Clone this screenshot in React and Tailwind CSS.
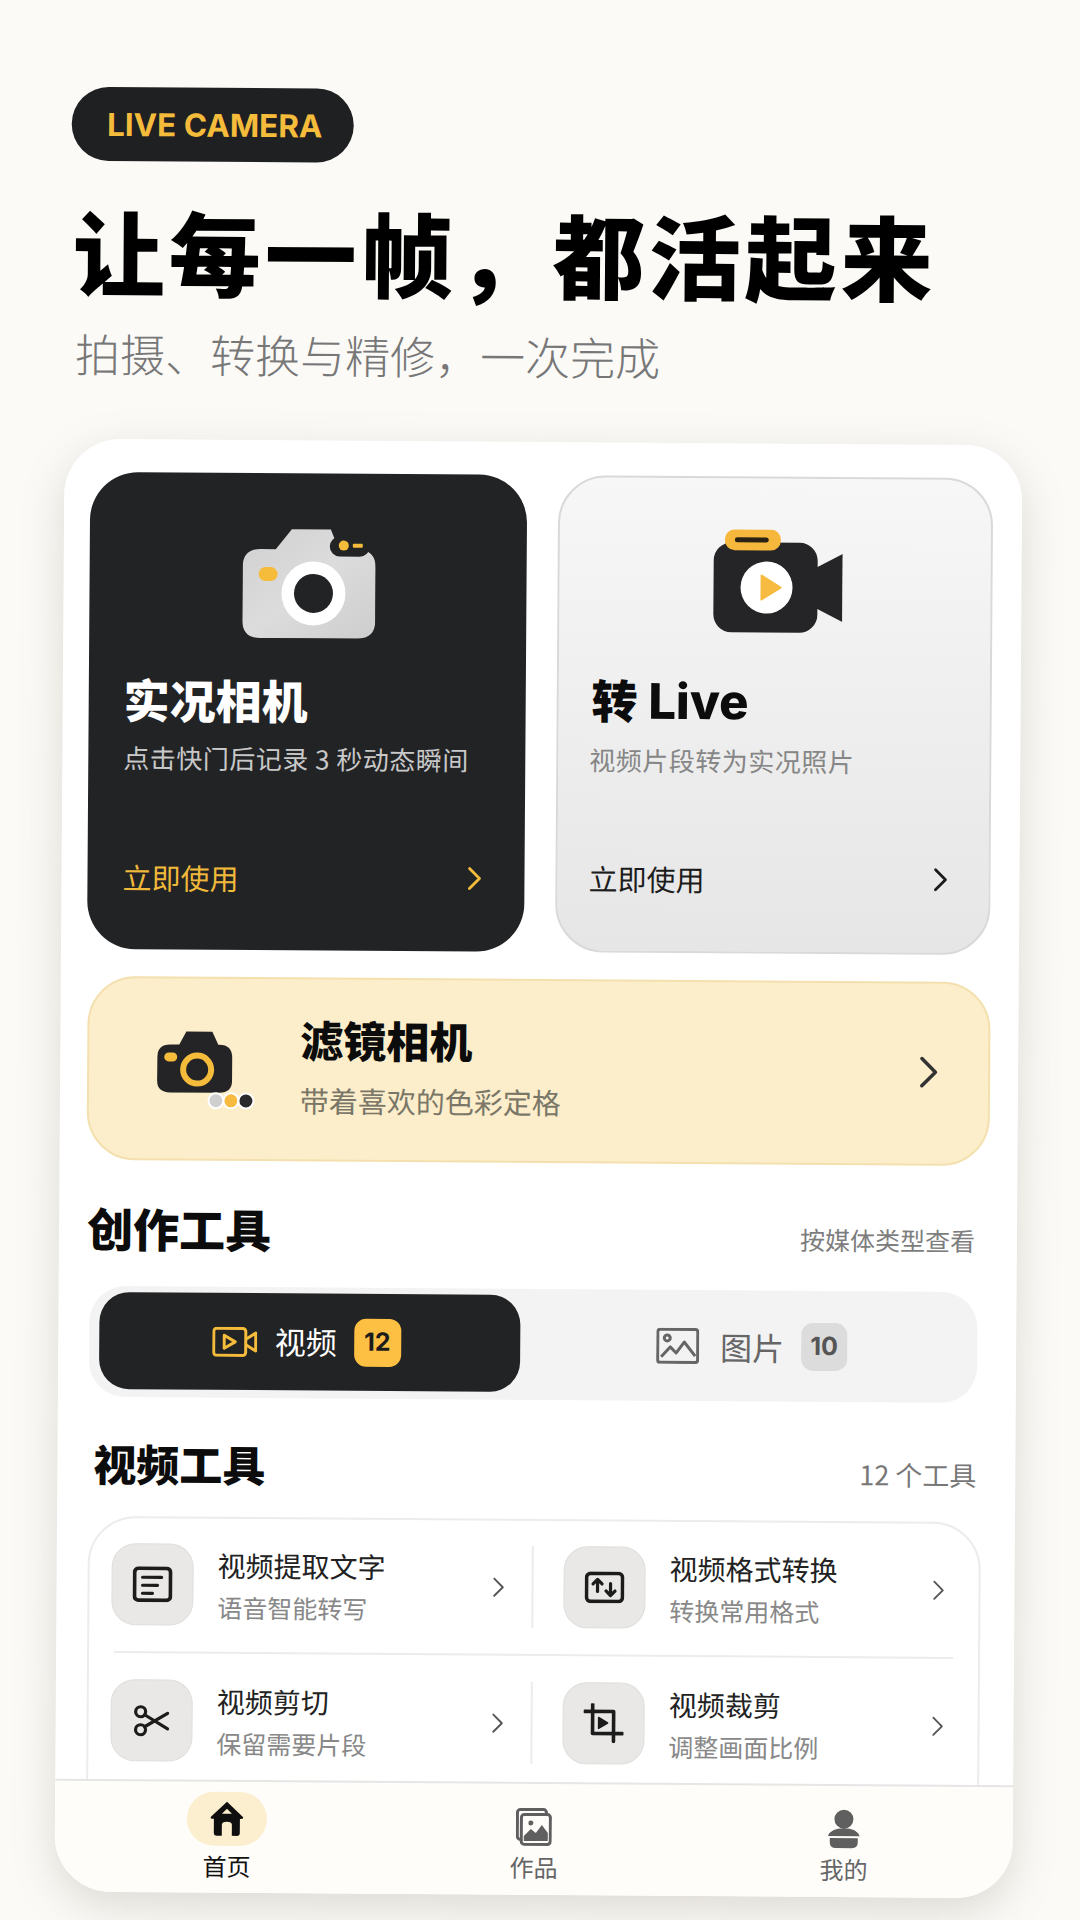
const sans = { fontFamily: '"Noto Sans CJK SC", "Noto Sans", sans-serif' };
const latin = { fontFamily: 'Inter, "Noto Sans CJK SC", sans-serif' };

function Chevron({ className, color = "#555", width = 2.6 }) {
  return (
    <svg viewBox="0 0 14 24" className={className} fill="none">
      <path d="M2 2 L12 12 L2 22" stroke={color} strokeWidth={width} strokeLinecap="round" strokeLinejoin="round" />
    </svg>
  );
}

function LiveCameraIcon() {
  return (
    <svg viewBox="0 0 133 110" className="w-[133px] h-[110px]">
      <defs>
        <linearGradient id="camBody" x1="0" y1="0" x2="1" y2="1">
          <stop offset="0" stopColor="#d0d0d0" />
          <stop offset="0.5" stopColor="#dcdcdc" />
          <stop offset="1" stopColor="#cdcdcd" />
        </linearGradient>
      </defs>
      <path d="M18 21 H33 L49 1 H88 L96 21 H115 Q133 21 133 39 V92 Q133 110 115 110 H18 Q0 110 0 92 V39 Q0 21 18 21 Z" fill="url(#camBody)" />
      <rect x="87" y="8" width="40" height="20" rx="10" fill="#222325" />
      <circle cx="101" cy="17" r="5" fill="#f5bc3c" />
      <rect x="110" y="15" width="10" height="4" rx="1" fill="#f5bc3c" />
      <rect x="16" y="39" width="19" height="14" rx="7" fill="#f5bc3c" />
      <circle cx="71" cy="65" r="32" fill="#fff" />
      <circle cx="71" cy="65" r="19.5" fill="#222325" />
    </svg>
  );
}

function ConvertIcon() {
  return (
    <svg viewBox="0 0 130 104" className="w-[130px] h-[104px]">
      <rect x="1" y="13" width="104" height="90" rx="18" fill="#252527" />
      <path d="M103 38 L130 24 V92 L103 78 Z" fill="#252527" />
      <rect x="12" y="0" width="56" height="21" rx="10" fill="#f5b83c" />
      <rect x="22" y="8" width="34" height="5" rx="2.5" fill="#2a2115" />
      <circle cx="54" cy="58" r="26" fill="#fff" />
      <path d="M49 46 L68 58 L49 70 Z" fill="#f7bb42" stroke="#f7bb42" strokeWidth="2" strokeLinejoin="round" />
    </svg>
  );
}

function FilterCameraIcon() {
  return (
    <svg viewBox="0 0 98 79" className="w-[98px] h-[79px]">
      <path d="M13 14 H22 L29 1 H55 L61 14 H62 Q75 14 75 27 V50 Q75 62 62 62 H13 Q0 62 0 50 V27 Q0 14 13 14 Z" fill="#242426" />
      <rect x="7" y="22" width="13" height="9" rx="4.5" fill="#f5bc3c" />
      <circle cx="40" cy="39" r="14" fill="none" stroke="#f5bc3c" strokeWidth="6" />
      <circle cx="59" cy="70" r="7.5" fill="#cfcfcf" stroke="#fff" strokeWidth="2" />
      <circle cx="74" cy="70" r="7.5" fill="#f7bb42" stroke="#fff" strokeWidth="2" />
      <circle cx="89" cy="70" r="7.5" fill="#2a2a2c" stroke="#fff" strokeWidth="2" />
    </svg>
  );
}

function VideoTabIcon() {
  return (
    <svg viewBox="0 0 45 30" className="w-[45px] h-[30px]" fill="none" stroke="#f5bc3c" strokeWidth="3" strokeLinejoin="round">
      <rect x="1.5" y="1.5" width="32" height="27" rx="3" />
      <path d="M12 8.5 L23 15 L12 21.5 Z" />
      <path d="M34 12 L43.5 6 V24 L34 18" />
    </svg>
  );
}

function ImageTabIcon() {
  return (
    <svg viewBox="0 0 43 36" className="w-[43px] h-[36px]" fill="none" stroke="#666" strokeWidth="3" strokeLinejoin="round">
      <rect x="1.5" y="1.5" width="40" height="33" rx="2.5" />
      <circle cx="11" cy="10" r="3" />
      <path d="M5 29 L14 19 L20 25 L28 14 L39 28" />
    </svg>
  );
}

function TextIcon() {
  return (
    <svg viewBox="0 0 40 36" className="w-[40px] h-[36px]" fill="none" stroke="#1c1c1c" strokeLinecap="round">
      <rect x="2" y="2" width="36" height="32" rx="4" strokeWidth="3.8" />
      <path d="M10 11 H29 M10 19 H25 M10 27 H20" strokeWidth="3.2" />
    </svg>
  );
}

function FormatIcon() {
  return (
    <svg viewBox="0 0 40 32" className="w-[40px] h-[32px]" fill="none" stroke="#1c1c1c" strokeLinecap="round" strokeLinejoin="round">
      <rect x="2" y="2" width="36" height="28" rx="4" strokeWidth="3.6" />
      <path d="M13 20 V9 M8.5 12.5 L13 8 L17.5 12.5" strokeWidth="3.2" />
      <path d="M26 12 V23 M21.5 19.5 L26 24 L30.5 19.5" strokeWidth="3.2" />
    </svg>
  );
}

function ScissorsIcon() {
  return (
    <svg viewBox="0 0 36 33" className="w-[36px] h-[33px]" fill="none" stroke="#1c1c1c" strokeWidth="3.2" strokeLinecap="round">
      <circle cx="7" cy="7.5" r="5" />
      <circle cx="7" cy="25.5" r="5" />
      <path d="M11 10.5 L34 24.5 M11 22.5 L34 9" />
    </svg>
  );
}

function CropIcon() {
  return (
    <svg viewBox="0 0 40 40" className="w-[40px] h-[40px]" fill="none" stroke="#1c1c1c" strokeWidth="3.6" strokeLinecap="round" strokeLinejoin="round">
      <path d="M1 8 H30 V38" />
      <path d="M9 1 V30 H39" />
      <path d="M15 14 L24 19.5 L15 25 Z" fill="#1c1c1c" strokeWidth="1.5" />
    </svg>
  );
}

function HomeIcon() {
  return (
    <svg viewBox="0 0 34 36" className="w-[34px] h-[36px]">
      <path d="M17 1 L33 16 Q34 18 31 18 H30 V32 Q30 35 27 35 H22 V24 Q22 21 17 21 Q12 21 12 24 V35 H7 Q4 35 4 32 V18 H3 Q0 18 1 16 Z" fill="#0f0f0f" />
      <path d="M17 8 L22 13 H12 Z" fill="#fcefcf" />
    </svg>
  );
}

function WorksIcon() {
  return (
    <svg viewBox="0 0 36 38" className="w-[36px] h-[38px]" fill="none" stroke="#5f5f5f">
      <rect x="1.5" y="1.5" width="29" height="30" rx="3" strokeWidth="3" />
      <rect x="5.5" y="6.5" width="29" height="30" rx="3" fill="#fefdfa" strokeWidth="3" />
      <circle cx="15" cy="15" r="2.5" fill="#5f5f5f" stroke="none" />
      <path d="M8 33 V28 L15 21 L20 25 L26 17 L32 25 V33 Z" fill="#5f5f5f" stroke="none" />
    </svg>
  );
}

function ProfileIcon() {
  return (
    <svg viewBox="0 0 34 40" className="w-[34px] h-[40px]">
      <circle cx="17" cy="10" r="9.5" fill="#5f5f5f" />
      <path d="M1 27 Q4 19 17 19 Q30 19 33 27 Z" fill="#5f5f5f" />
      <path d="M3 29 H31 V33 Q31 39 25 39 H9 Q3 39 3 33 Z" fill="#5f5f5f" />
    </svg>
  );
}

function ToolCell({ icon, title, desc, right }) {
  return (
    <div className={right ? "flex items-center pl-[30px] pr-[34px]" : "flex items-center pl-[22px] pr-[27px] border-r-2 border-[#ececec]"}>
      <div className="w-[82px] h-[82px] shrink-0 rounded-[24px] bg-[#e9e8e6] border border-[#dededc] flex items-center justify-center">
        {icon}
      </div>
      <div className="ml-[24px] flex-1">
        <div className="text-[28px] leading-[36px] text-[#222]">{title}</div>
        <div className="mt-[7px] text-[25px] leading-[34px] text-[#888]">{desc}</div>
      </div>
      <Chevron className="w-[12px] h-[21px] shrink-0" color="#555" width={2.2} />
    </div>
  );
}

function NavItem({ icon, label, active }) {
  return (
    <div className="flex flex-col items-center">
      <div className={active ? "w-[80px] h-[54px] rounded-full bg-[#fcefcf] flex items-center justify-center" : "w-[80px] h-[54px] flex items-center justify-center translate-y-[6px]"}>
        {icon}
      </div>
      <div className={active ? "mt-[3px] text-[24px] leading-[34px] text-[#111]" : "mt-[2px] text-[24px] leading-[34px] text-[#666]"}>
        {label}
      </div>
    </div>
  );
}

export default function App() {
  return (
    <div className="w-[1080px] h-[1920px] overflow-hidden bg-[#fbfaf7]" style={sans}>
      {/* the whole shot leans slightly clockwise */}
      <div className="rotate-[0.4deg] pt-[90px]">
        <div className="pl-[66px]">
          <div className="w-[282px] h-[74px] rounded-full bg-[#1f2022] flex items-center justify-center pt-[2px] pl-[4px] text-[31.5px] font-bold text-[#f5bc3c]" style={latin}>
            LIVE CAMERA
          </div>
          <h1 className="mt-[33px] ml-[2px] text-[92px] leading-[110px] tracking-[4px] font-black text-black whitespace-nowrap">让每一帧，都活起来</h1>
          <p className="mt-[19px] ml-[5px] text-[45px] leading-[60px] font-light text-[#777]">拍摄、转换与精修，一次完成</p>
        </div>

        <div className="mt-[56px] ml-[61px] w-[958px] h-[1453px] rounded-[56px] bg-white shadow-[0_14px_44px_rgba(120,110,85,0.22)] flex flex-col overflow-hidden">
          <div className="flex-1 min-h-0 overflow-hidden pt-[33px] pl-[26px] pr-[28px]">
            <div className="flex gap-[31px]">
              <div className="w-[437px] h-[477px] rounded-[48px] bg-[#222325] pt-[55px] px-[35px] flex flex-col">
                <div className="flex justify-center pl-[2px]"><LiveCameraIcon /></div>
                <div className="mt-[31px] text-[46px] leading-[60px] font-black text-white">实况相机</div>
                <div className="mt-[11px] text-[26px] leading-[36px] tracking-[0.5px] text-[#c8c8c8] whitespace-nowrap">点击快门后记录 3 秒动态瞬间</div>
                <div className="mt-[81px] flex items-center justify-between pr-[8px]">
                  <span className="text-[29px] leading-[40px] text-[#f0b93a]">立即使用</span>
                  <Chevron className="w-[14px] h-[24px]" color="#f5bc3c" width={2.8} />
                </div>
              </div>

              <div className="w-[435px] h-[477px] rounded-[48px] border-2 border-[#d9d9d9] bg-gradient-to-b from-[#f7f7f7] to-[#e6e6e6] pt-[51px] px-[31px] flex flex-col">
                <div className="flex justify-center pl-[5px]"><ConvertIcon /></div>
                <div className="mt-[36px] ml-[2px] text-[46px] leading-[60px] font-black text-[#0c0c0c]">转 <span style={latin} className="text-[49px] font-extrabold">Live</span></div>
                <div className="mt-[10px] text-[26px] leading-[36px] tracking-[0.5px] text-[#868686] whitespace-nowrap">视频片段转为实况照片</div>
                <div className="mt-[80px] flex items-center justify-between pr-[10px]">
                  <span className="text-[29px] leading-[40px] text-[#1c1c1c]">立即使用</span>
                  <Chevron className="w-[14px] h-[24px]" color="#1c1c1c" width={2.8} />
                </div>
              </div>
            </div>

            <div className="mt-[27px] ml-px h-[184px] rounded-[48px] bg-[#fdeecb] border-2 border-[#f3e0ae] flex items-center pl-[68px] pr-[50px]">
              <div className="mt-[2px]"><FilterCameraIcon /></div>
              <div className="ml-[45px] flex-1 pb-[11px]">
                <div className="text-[43px] leading-[56px] font-black text-[#0c0c0c]">滤镜相机</div>
                <div className="mt-[14px] text-[29px] leading-[38px] text-[#7a7768]">带着喜欢的色彩定格</div>
              </div>
              <Chevron className="w-[19px] h-[33px] -mt-[4px]" color="#333" width={2.6} />
            </div>

            <div className="mt-[37px] ml-[2px] pr-[14px] flex items-end justify-between">
              <h2 className="text-[46px] leading-[60px] font-black text-[#0c0c0c]">创作工具</h2>
              <span className="pb-[5px] text-[25px] leading-[36px] text-[#7d7d7d]">按媒体类型查看</span>
            </div>

            <div className="mt-[29px] ml-[5px] mr-[11px] h-[111px] rounded-[36px] bg-[#f3f3f3] pl-[10px] pt-[6px] flex">
              <div className="w-[421px] h-[97px] rounded-[30px] bg-[#222325] flex items-center justify-center pr-[7px]">
                <VideoTabIcon />
                <span className="ml-[18px] text-[31px] text-white">视频</span>
                <span className="ml-[17px] w-[47px] h-[48px] rounded-[12px] bg-[#fdc043] flex items-center justify-center text-[25px] font-bold text-[#1c1c1c]" style={latin}>12</span>
              </div>
              <div className="flex-1 h-[97px] flex items-center justify-center translate-y-[1px] translate-x-[3px]">
                <ImageTabIcon />
                <span className="ml-[21px] text-[32px] text-[#666]">图片</span>
                <span className="ml-[17px] w-[46px] h-[48px] rounded-[12px] bg-[#dcdcdc] flex items-center justify-center text-[25px] font-bold text-[#555]" style={latin}>10</span>
              </div>
            </div>

            <div className="mt-[35px] ml-[10px] pr-[11px] flex items-end justify-between">
              <h2 className="text-[43px] leading-[60px] font-black text-[#0c0c0c]">视频工具</h2>
              <span className="pb-[5px] text-[27px] leading-[36px] text-[#777]">12 个工具</span>
            </div>

            <div className="mt-[24px] ml-[5px] mr-[6px] rounded-t-[48px] border-2 border-[#ececec] bg-white">
              <div className="grid grid-cols-[444px_1fr] pt-[25px] pb-[26px]">
                <ToolCell icon={<TextIcon />} title="视频提取文字" desc="语音智能转写" />
                <ToolCell right icon={<FormatIcon />} title="视频格式转换" desc="转换常用格式" />
              </div>
              <div className="mx-[25px] h-[2px] bg-[#ececec]" />
              <div className="grid grid-cols-[444px_1fr] pt-[26px] pb-[26px]">
                <ToolCell icon={<ScissorsIcon />} title="视频剪切" desc="保留需要片段" />
                <ToolCell right icon={<CropIcon />} title="视频裁剪" desc="调整画面比例" />
              </div>
            </div>
          </div>

          <div className="h-[113px] shrink-0 border-t-2 border-[#e6e6e6] bg-[#fefdfa] grid grid-cols-[310px_304px_1fr] pl-[17px] pr-[11px] pt-[10px]">
            <NavItem active icon={<HomeIcon />} label="首页" />
            <NavItem icon={<WorksIcon />} label="作品" />
            <NavItem icon={<ProfileIcon />} label="我的" />
          </div>
        </div>
      </div>
    </div>
  );
}
